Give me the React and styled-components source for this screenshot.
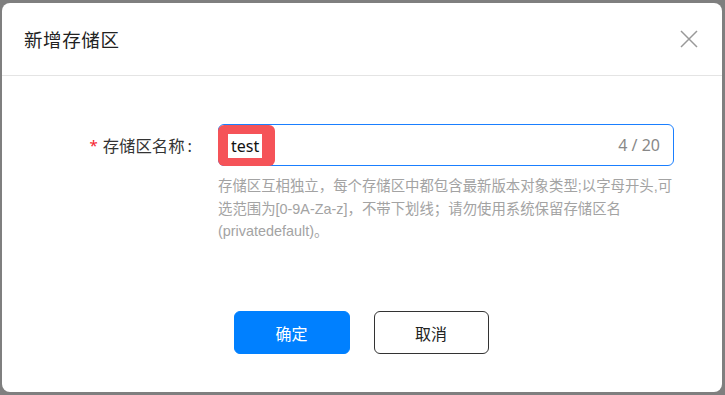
import React from "react";
import styled, { createGlobalStyle } from "styled-components";

const GlobalStyle = createGlobalStyle`
  html, body {
    margin: 0;
    padding: 0;
    background: #7f7f7f;
  }
  body {
    font-family: "Noto Sans", "Noto Sans CJK SC", sans-serif;
  }
`;

const Page = styled.div`
  width: 725px;
  height: 395px;
  padding: 3px 0 0 2px;
  box-sizing: border-box;
`;

const Dialog = styled.div`
  width: 720px;
  height: 389px;
  background: #fff;
  border-radius: 8px;
  display: flex;
  flex-direction: column;
`;

const Header = styled.div`
  height: 72px;
  flex-shrink: 0;
  display: flex;
  align-items: center;
  justify-content: space-between;
  padding: 0 23px 0 22px;
  border-bottom: 1px solid #e4e4e4;
`;

const Title = styled.h2`
  margin: 0;
  font-size: 18.5px;
  font-weight: 400;
  color: #222;
  letter-spacing: 0.6px;
`;

const CloseButton = styled.button`
  width: 20px;
  height: 20px;
  padding: 0;
  border: none;
  background: none;
  display: flex;
  align-items: center;
  justify-content: center;
  cursor: pointer;
`;

const Body = styled.div`
  flex: 1;
  display: flex;
  flex-direction: column;
  padding-top: 48px;
`;

const FormRow = styled.div`
  display: flex;
  align-items: flex-start;
`;

const Label = styled.label`
  width: 190px;
  height: 42px;
  display: flex;
  align-items: center;
  justify-content: flex-end;
  font-size: 16.4px;
  color: #333;
  margin-right: 26px;
`;

const Required = styled.span`
  color: #f5222d;
  margin-right: 5px;
  font-size: 15px;
`;

const Colon = styled.span`
  margin-left: 3px;
`;

const Field = styled.div`
  width: 456px;
`;

const InputBox = styled.div`
  position: relative;
  height: 42px;
  box-sizing: border-box;
  border: 1px solid #1a7fff;
  border-radius: 6px;
  display: flex;
  align-items: center;
  justify-content: flex-end;
  padding: 0 13px;
`;

const Counter = styled.span`
  font-size: 16px;
  color: #888;
`;

const Highlight = styled.span`
  position: absolute;
  left: -1px;
  top: 0;
  bottom: -1px;
  width: 57px;
  background: #f55358;
  border-radius: 6px;
  display: flex;
  align-items: center;
  padding-left: 10px;
  box-sizing: border-box;
`;

const Value = styled.span`
  background: #fff;
  height: 24px;
  padding: 0 3px;
  display: flex;
  align-items: center;
  font-size: 16px;
  color: #111;
`;

const Help = styled.p`
  margin: 9px 0 0;
  font-family: "Liberation Sans", "Noto Sans CJK SC", sans-serif;
  font-size: 14.4px;
  line-height: 22.5px;
  color: #a3a3a3;
  white-space: nowrap;
`;

const Footer = styled.div`
  margin-top: auto;
  margin-bottom: 38px;
  display: flex;
  justify-content: center;
  gap: 24px;
  padding-right: 2px;
`;

const Button = styled.button`
  width: ${(p) => (p.$primary ? "116px" : "115px")};
  height: 43px;
  box-sizing: border-box;
  border-radius: 6px;
  font-family: inherit;
  font-size: 16px;
  cursor: pointer;
  border: 1px solid ${(p) => (p.$primary ? "#0080ff" : "#333")};
  background: ${(p) => (p.$primary ? "#0080ff" : "#fff")};
  color: ${(p) => (p.$primary ? "#fff" : "#222")};
`;

const App = () => {
  return (
    <>
      <GlobalStyle />
      <Page>
        <Dialog>
          <Header>
            <Title>新增存储区</Title>
            <CloseButton aria-label="close">
              <svg width="18" height="18" viewBox="0 0 18 18">
                <path
                  d="M1 1 L17 17 M17 1 L1 17"
                  stroke="#999"
                  strokeWidth="1.5"
                  fill="none"
                />
              </svg>
            </CloseButton>
          </Header>
          <Body>
            <FormRow>
              <Label>
                <Required>*</Required>存储区名称<Colon>:</Colon>
              </Label>
              <Field>
                <InputBox>
                  <Highlight>
                    <Value>test</Value>
                  </Highlight>
                  <Counter>4 / 20</Counter>
                </InputBox>
                <Help>
                  存储区互相独立，每个存储区中都包含最新版本对象类型;以字母开头,可
                  <br />
                  选范围为[0-9A-Za-z]，不带下划线；请勿使用系统保留存储区名
                  <br />
                  (privatedefault)。
                </Help>
              </Field>
            </FormRow>
            <Footer>
              <Button $primary>确定</Button>
              <Button>取消</Button>
            </Footer>
          </Body>
        </Dialog>
      </Page>
    </>
  );
};

export default App;
